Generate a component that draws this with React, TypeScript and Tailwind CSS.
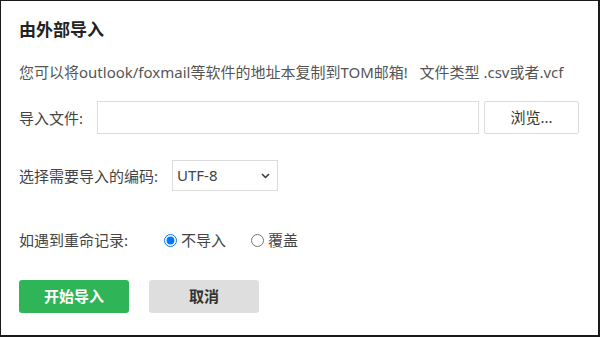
import React, { useState } from 'react';

const font = { fontFamily: '"Noto Sans", "Noto Sans CJK SC", sans-serif' };

const App: React.FC = () => {
  const [mode, setMode] = useState<'skip' | 'cover'>('skip');

  return (
    <div
      className="w-[600px] h-[337px] bg-white border-l border-t border-r-2 border-b-2 border-[#1a1a1a] text-[#444] overflow-hidden"
      style={font}
    >
      <div className="pl-[18px] pt-[19px] flex flex-col">
        {/* Header */}
        <h1 className="text-[17px] leading-[20px] font-bold text-[#222]">由外部导入</h1>
        <p className="mt-[22px] text-[15px] leading-[20px] text-[#555] whitespace-nowrap">
          您可以将outlook/foxmail等软件的地址本复制到TOM邮箱!&nbsp;&nbsp;&nbsp;文件类型 .csv或者.vcf
        </p>

        {/* File row */}
        <div className="mt-[19px] flex items-center">
          <span className="w-[78px] text-[15px] leading-[20px]">导入文件:</span>
          <div className="w-[382px] h-[33px] border border-[#dcdcdc] bg-white"></div>
          <button className="ml-[5px] w-[95px] h-[33px] border border-[#dcdcdc] bg-white text-[15px] text-[#333] rounded-[2px]">
            浏览...
          </button>
        </div>

        {/* Encoding row */}
        <div className="mt-[26px] flex items-center">
          <span className="w-[153px] text-[15px] leading-[20px]">选择需要导入的编码:</span>
          <div className="relative w-[106px] h-[31px]">
            <select
              className="w-full h-full appearance-none border border-[#dcdcdc] bg-white pl-[4px] text-[15px] text-[#444] outline-none"
              style={font}
              defaultValue="UTF-8"
            >
              <option>UTF-8</option>
              <option>GBK</option>
            </select>
            <svg
              className="absolute right-[8px] top-[13px] pointer-events-none"
              width="9"
              height="6"
              viewBox="0 0 9 6"
              fill="none"
            >
              <path d="M1 1l3.5 3.5L8 1" stroke="#333" strokeWidth="1.5" />
            </svg>
          </div>
        </div>

        {/* Duplicate handling row */}
        <div className="mt-[39px] flex items-center h-[20px]">
          <span className="w-[145px] text-[15px] leading-[20px]">如遇到重命记录:</span>
          <label className="flex items-center text-[15px] leading-[20px]">
            <input
              type="radio"
              name="dup"
              checked={mode === 'skip'}
              onChange={() => setMode('skip')}
              className="m-0 w-[13px] h-[13px]"
            />
            <span className="ml-[4px]">不导入</span>
          </label>
          <label className="ml-[25px] flex items-center text-[15px] leading-[20px]">
            <input
              type="radio"
              name="dup"
              checked={mode === 'cover'}
              onChange={() => setMode('cover')}
              className="m-0 w-[13px] h-[13px]"
            />
            <span className="ml-[4px]">覆盖</span>
          </label>
        </div>

        {/* Actions */}
        <div className="mt-[30px] flex gap-[20px]">
          <button className="w-[110px] h-[33px] rounded-[3px] bg-[#2fb457] text-white text-[15px] font-bold">
            开始导入
          </button>
          <button className="w-[110px] h-[33px] rounded-[3px] bg-[#dedede] text-[#333] text-[15px] font-bold">
            取消
          </button>
        </div>
      </div>
    </div>
  );
};

export default App;
